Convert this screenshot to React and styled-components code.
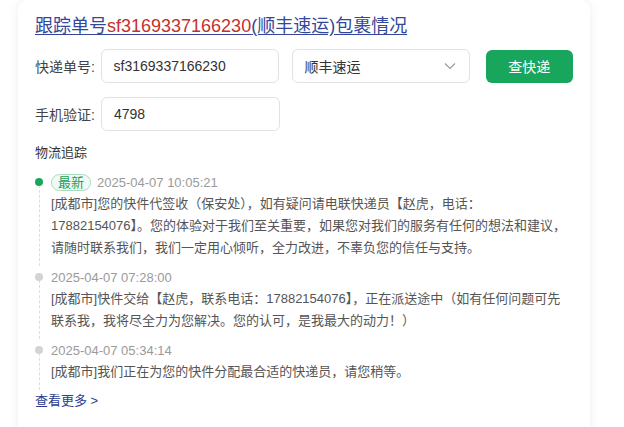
import styled, { createGlobalStyle } from "styled-components";

const GlobalStyle = createGlobalStyle`
  body {
    margin: 0;
    background: #fff;
    font-family: "Liberation Sans", "Noto Sans CJK SC", sans-serif;
  }
`;

const Page = styled.div`
  padding: 0 34px 0 18px;
`;

const Card = styled.div`
  width: 572px;
  height: 440px;
  box-sizing: border-box;
  padding: 13px 17px 0;
  background: #fff;
  border-radius: 10px;
  box-shadow: 0 0 12px rgba(0, 0, 0, 0.07);
`;

const Title = styled.a`
  display: inline-block;
  font-size: 18px;
  line-height: 26px;
  color: #34479b;
  text-decoration: underline;
  text-underline-offset: 2px;
  cursor: pointer;
`;

const Num = styled.span`
  color: #c53030;
`;

const Row = styled.div`
  display: flex;
  align-items: center;
  margin-top: ${(p) => p.$mt || 0}px;
`;

const Label = styled.span`
  width: 66px;
  font-size: 14px;
  color: #444;
`;

const Field = styled.div`
  width: 179px;
  height: 34px;
  box-sizing: border-box;
  border: 1px solid #e2e2e2;
  border-radius: 6px;
  display: flex;
  align-items: center;
  justify-content: space-between;
  padding: 0 12px;
  font-size: 14px;
  color: #333;
  margin-right: ${(p) => p.$mr || 0}px;
`;

const Button = styled.button`
  width: 88px;
  height: 33px;
  border: none;
  border-radius: 6px;
  background: #18a55c;
  color: #fff;
  font-size: 14px;
  font-family: inherit;
  cursor: pointer;
`;

const Section = styled.div`
  margin-top: 11px;
  font-size: 13px;
  line-height: 22px;
  color: #333;
`;

const Timeline = styled.div`
  margin-top: 7px;
`;

const Item = styled.div`
  position: relative;
  padding: 0 0 7px 16px;

  &::before {
    content: "";
    position: absolute;
    left: 4px;
    top: 14px;
    bottom: 0;
    border-left: 1px dashed #ddd;
  }
`;

const Dot = styled.span`
  position: absolute;
  left: 0;
  top: 7px;
  width: 8px;
  height: 8px;
  border-radius: 50%;
  background: ${(p) => (p.$active ? "#1aa55c" : "#d4d4d4")};
`;

const Head = styled.div`
  display: flex;
  align-items: center;
  gap: 6px;
  height: 22px;
`;

const Tag = styled.span`
  height: 17px;
  box-sizing: border-box;
  padding: 0 6px;
  border: 1px solid #a9dcbd;
  border-radius: 9px;
  background: #f1faf4;
  color: #22a05a;
  font-size: 13px;
  line-height: 15px;
`;

const Time = styled.span`
  font-size: 13px;
  color: #9a9a9a;
`;

const Desc = styled.div`
  font-size: 13px;
  line-height: 22px;
  color: #555;
`;

const More = styled.a`
  display: inline-block;
  font-size: 13px;
  line-height: 22px;
  color: #2b3c92;
  cursor: pointer;
`;

const Chevron = () => (
  <svg width="14" height="14" viewBox="0 0 14 14" fill="none">
    <path d="M2 4.5l5 5 5-5" stroke="#999" strokeWidth="1.1" />
  </svg>
);

const tracks = [
  {
    time: "2025-04-07 10:05:21",
    active: true,
    text: "[成都市]您的快件代签收（保安处），如有疑问请电联快递员【赵虎，电话：17882154076】。您的体验对于我们至关重要，如果您对我们的服务有任何的想法和建议，请随时联系我们，我们一定用心倾听，全力改进，不辜负您的信任与支持。",
  },
  {
    time: "2025-04-07 07:28:00",
    text: "[成都市]快件交给【赵虎，联系电话：17882154076】，正在派送途中（如有任何问题可先联系我，我将尽全力为您解决。您的认可，是我最大的动力！）",
  },
  {
    time: "2025-04-07 05:34:14",
    text: "[成都市]我们正在为您的快件分配最合适的快递员，请您稍等。",
  },
];

export default function App() {
  return (
    <Page>
      <GlobalStyle />
      <Card>
        <Title>
          跟踪单号<Num>sf3169337166230</Num>(顺丰速运)包裹情况
        </Title>
        <Row $mt={10}>
          <Label>快递单号:</Label>
          <Field $mr={13}>sf3169337166230</Field>
          <Field $mr={16}>
            顺丰速运
            <Chevron />
          </Field>
          <Button>查快递</Button>
        </Row>
        <Row $mt={14}>
          <Label>手机验证:</Label>
          <Field>4798</Field>
        </Row>
        <Section>物流追踪</Section>
        <Timeline>
          {tracks.map((t) => (
            <Item key={t.time}>
              <Dot $active={t.active} />
              <Head>
                {t.active && <Tag>最新</Tag>}
                <Time>{t.time}</Time>
              </Head>
              <Desc>{t.text}</Desc>
            </Item>
          ))}
        </Timeline>
        <More>查看更多 &gt;</More>
      </Card>
    </Page>
  );
}
